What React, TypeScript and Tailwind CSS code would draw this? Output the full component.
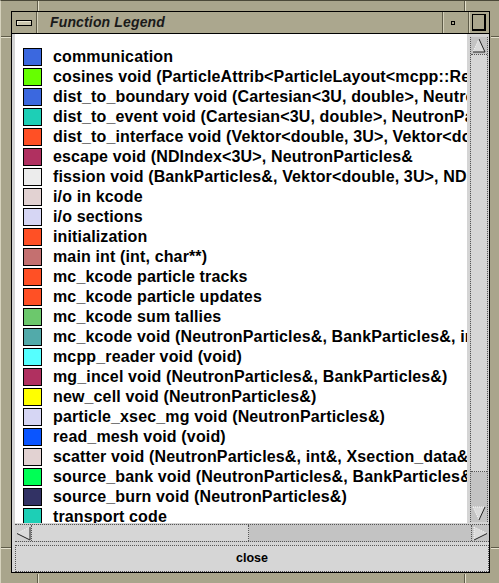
import React from "react";

const entries: [string, string][] = [
  ["#3b68df", "communication"],
  ["#66ff00", "cosines void (ParticleAttrib<ParticleLayout<mcpp::Real, 3U>>&)"],
  ["#3b68df", "dist_to_boundary void (Cartesian<3U, double>, NeutronParticles&)"],
  ["#1dcfb6", "dist_to_event void (Cartesian<3U, double>, NeutronParticles&)"],
  ["#ff5025", "dist_to_interface void (Vektor<double, 3U>, Vektor<double, 3U>)"],
  ["#b03060", "escape void (NDIndex<3U>, NeutronParticles&"],
  ["#ececec", "fission void (BankParticles&, Vektor<double, 3U>, NDIndex<3U>)"],
  ["#e2d2d2", "i/o in kcode"],
  ["#d6d6f4", "i/o sections"],
  ["#ff5025", "initialization"],
  ["#c47070", "main int (int, char**)"],
  ["#ff5025", "mc_kcode particle tracks"],
  ["#ff5025", "mc_kcode particle updates"],
  ["#6cc86c", "mc_kcode sum tallies"],
  ["#52aaaa", "mc_kcode void (NeutronParticles&, BankParticles&, int)"],
  ["#55ffff", "mcpp_reader void (void)"],
  ["#b03060", "mg_incel void (NeutronParticles&, BankParticles&)"],
  ["#ffff00", "new_cell void (NeutronParticles&)"],
  ["#d6d6f4", "particle_xsec_mg void (NeutronParticles&)"],
  ["#0a55ff", "read_mesh void (void)"],
  ["#e2d2d2", "scatter void (NeutronParticles&, int&, Xsection_data&)"],
  ["#00ff55", "source_bank void (NeutronParticles&, BankParticles&)"],
  ["#323264", "source_burn void (NeutronParticles&)"],
  ["#1dcfb6", "transport code"],
];

function Arrow({ dir }: { dir: "up" | "down" | "left" | "right" }) {
  const w = dir === "up" || dir === "down" ? 16 : 17;
  const h = 17;
  let light = "";
  let dark = "";
  if (dir === "up") {
    light = "M8 2 L2 15";
    dark = "M2 15 L14 15 L8 2";
  } else if (dir === "down") {
    light = "M2 2 L14 2 M2 2 L8 15";
    dark = "M8 15 L14 2";
  } else if (dir === "right") {
    light = "M2 2 L2 15 M2 2 L15 8.5";
    dark = "M2 15 L15 8.5";
  } else {
    light = "M2 8.5 L15 2";
    dark = "M15 2 L15 15 L2 8.5";
  }
  const fill =
    dir === "up"
      ? "8,2 2,15 14,15"
      : dir === "down"
      ? "2,2 14,2 8,15"
      : dir === "right"
      ? "2,2 2,15 15,8.5"
      : "15,2 15,15 2,8.5";
  return (
    <svg width={w} height={h} viewBox={`0 0 ${w} ${h}`} className="block shrink-0">
      <polygon points={fill} fill="#dadada" />
      <path d={light} stroke="#f8f8f8" strokeWidth="1" fill="none" strokeDasharray="1 1" />
      <path d={dark} stroke="#222" strokeWidth="1" fill="none" />
    </svg>
  );
}

export default function App() {
  return (
    <div className="w-[499px] h-[583px] bg-white font-['Liberation_Sans',Arial,sans-serif]">
      <div className="relative w-[499px] h-[583px] bg-[#a9a58c] border-t border-l border-t-[#4a4838] border-l-[#d6d2bd] pl-[10px] pt-[10px] pr-[9px] pb-[10px]">
        {/* resize corner marks on the frame */}
        <div className="absolute left-[36px] top-0 w-[2px] h-[10px] border-l border-r border-l-[#5e5b48] border-r-[#e4e0cc]" />
        <div className="absolute left-[463px] top-0 w-[2px] h-[10px] border-l border-r border-l-[#5e5b48] border-r-[#e4e0cc]" />
        <div className="absolute left-[36px] top-[573px] w-[2px] h-[9px] border-l border-r border-l-[#5e5b48] border-r-[#e4e0cc]" />
        <div className="absolute left-[463px] top-[573px] w-[2px] h-[9px] border-l border-r border-l-[#5e5b48] border-r-[#e4e0cc]" />
        <div className="absolute left-0 top-[35px] w-[10px] h-[2px] border-t border-b border-t-[#5e5b48] border-b-[#e4e0cc]" />
        <div className="absolute left-0 top-[546px] w-[10px] h-[2px] border-t border-b border-t-[#5e5b48] border-b-[#e4e0cc]" />
        <div className="absolute left-[490px] top-[35px] w-[9px] h-[2px] border-t border-b border-t-[#5e5b48] border-b-[#e4e0cc]" />
        <div className="absolute left-[490px] top-[546px] w-[9px] h-[2px] border-t border-b border-t-[#5e5b48] border-b-[#e4e0cc]" />

        <div className="w-full h-full border border-black flex flex-col">
          {/* title bar */}
          <div className="h-[22px] border-b border-black flex bg-[#aba78e] shrink-0">
            <div className="w-[25px] border-r border-[#5e5b48] flex items-center justify-center">
              <div className="w-[16px] h-[6px] border border-black bg-[#c9c5ad] shadow-[inset_1px_1px_0_#ece8d4]" />
            </div>
            <div className="flex-1 pl-[13px] text-[14px] leading-[21px] font-bold italic text-[#1a1a1a] tracking-[0.15px] shadow-[inset_1px_0_0_#d4d0ba]">
              Function Legend
            </div>
            <div className="w-[27px] border-l border-r border-[#5e5b48] flex items-center justify-center shadow-[inset_1px_0_0_#d4d0ba]">
              <div className="w-[4px] h-[4px] border border-black bg-[#aba78e] ml-[-6px]" />
            </div>
            <div className="w-[20px] flex items-start pt-[2px] pl-[3px] shadow-[inset_1px_0_0_#d4d0ba]">
              <div className="w-[14px] h-[17px] border border-black border-r-2 border-b-2 bg-[#aba78e]" />
            </div>
          </div>

          {/* body */}
          <div className="flex-1 bg-[#d4d4d4] flex flex-col">
            <div className="h-[489px] flex pl-[3px] pr-[1px] gap-[3px] shrink-0">
              <div className="w-[452px] bg-white overflow-hidden pl-[8px] pt-[13px]">
                {entries.map(([color, label], i) => (
                  <div key={i} className="flex items-center h-[20px] gap-[11px] whitespace-nowrap">
                    <div
                      className="w-[19px] h-[18px] border border-black shrink-0"
                      style={{ backgroundColor: color }}
                    />
                    <span className="text-[16px] leading-[20px] font-bold tracking-[0.14px] text-black">{label}</span>
                  </div>
                ))}
              </div>
              <div className="w-[18px] flex flex-col pt-[3px] pb-[1px]">
                <div className="flex-1 flex flex-col border-x border-dotted border-[#555] bg-[#c3c3c3]">
                  <Arrow dir="up" />
                  <div className="h-[418px] bg-[#d6d6d6] border-y border-dotted border-[#555] shrink-0" />
                  <div className="flex-1" />
                  <Arrow dir="down" />
                </div>
              </div>
            </div>

            <div className="mt-[1px] ml-[3px] h-[18px] flex border-y border-dotted border-[#555] bg-[#c3c3c3] shrink-0">
              <div className="w-[17px] bg-[#d0d0d0] border-r border-dotted border-[#555] flex items-center">
                <Arrow dir="left" />
              </div>
              <div className="w-[217px] bg-[#d6d6d6] border-r border-dotted border-[#555]" />
              <div className="flex-1" />
              <div className="w-[18px] border-l border-dotted border-[#555] flex items-center">
                <Arrow dir="right" />
              </div>
            </div>

            <div className="mt-[3px] ml-[3px] h-[27px] bg-[#d6d6d6] border border-dotted border-[#555] flex items-center justify-center text-[12.5px] font-bold text-black shrink-0">
              close
            </div>
          </div>
        </div>
      </div>
    </div>
  );
}
